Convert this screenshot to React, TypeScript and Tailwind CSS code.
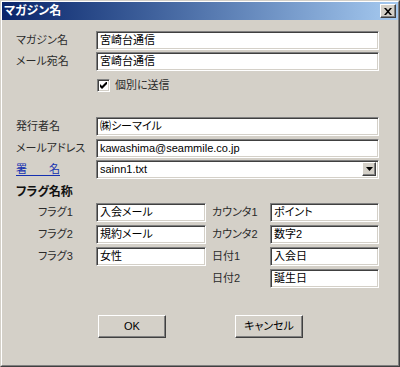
import React from "react"

const font = "font-['Liberation_Sans','Noto_Sans_CJK_JP',sans-serif] [font-feature-settings:'palt']"

function Field({ value, className = "" }: { value: string; className?: string }) {
    return (
        <div
            className={`h-[19px] bg-white border border-t-[#808080] border-l-[#808080] border-b-white border-r-white shadow-[inset_1px_1px_0_#404040,inset_-1px_-1px_0_#d4d0c8] flex items-center pl-[3px] text-[11px] text-black leading-none ${className}`}
        >
            {value}
        </div>
    )
}

function Button({ label }: { label: string }) {
    return (
        <div className="w-[68px] h-[23px] bg-[#d4d0c8] border border-t-white border-l-white border-b-[#404040] border-r-[#404040] shadow-[inset_-1px_-1px_0_#808080] flex items-center justify-center text-[11px] text-black">
            {label}
        </div>
    )
}

function Row({ label, value, top }: { label: string; value: string; top: string }) {
    return (
        <div className={`flex items-center ${top}`}>
            <div className="w-[80px] text-[11px] text-[#2a2a2a]">{label}</div>
            <Field value={value} className="w-[283px]" />
        </div>
    )
}

export default function App() {
    return (
        <div className={`w-[400px] h-[367px] border border-t-[#d4d0c8] border-l-[#d4d0c8] border-b-[#404040] border-r-[#404040] ${font}`}>
            <div className="h-full border border-t-white border-l-white border-b-[#808080] border-r-[#808080] bg-[#d4d0c8] flex flex-col">
                {/* title bar */}
                <div className="h-[18px] bg-gradient-to-r from-[#0a246a] to-[#a6caf0] flex items-center justify-between pl-[2px] pr-[2px]">
                    <span className="text-white font-bold text-[12px] leading-none">マガジン名</span>
                    <div className="w-[16px] h-[14px] bg-[#d4d0c8] border border-t-white border-l-white border-b-[#404040] border-r-[#404040] shadow-[inset_-1px_-1px_0_#808080] flex items-center justify-center">
                        <svg width="8" height="7" viewBox="0 0 8 7">
                            <path d="M0 0h2l2 2.2L6 0h2L5 3.5 8 7H6L4 4.8 2 7H0l3-3.5z" fill="#000" />
                        </svg>
                    </div>
                </div>

                <div className="pl-[14px] flex flex-col">
                    <Row label="マガジン名" value="宮崎台通信" top="mt-[11px]" />
                    <Row label="メール宛名" value="宮崎台通信" top="mt-[2px]" />
                    <div className="flex items-center mt-[6px] pl-[81px] gap-[5px]">
                        <div className="w-[13px] h-[13px] bg-white border border-t-[#808080] border-l-[#808080] border-b-white border-r-white shadow-[inset_1px_1px_0_#404040,inset_-1px_-1px_0_#d4d0c8] flex items-center justify-center">
                            <svg width="7" height="7" viewBox="0 0 7 7">
                                <path d="M0 2v3l2 2 5-5V-1L2 4z" fill="#000" />
                            </svg>
                        </div>
                        <span className="text-[11px] text-[#2a2a2a]">個別に送信</span>
                    </div>

                    <Row label="発行者名" value="㈱シーマイル" top="mt-[23px]" />
                    <Row label="メールアドレス" value="kawashima@seammile.co.jp" top="mt-[3px]" />
                    <div className="flex items-center mt-[2px]">
                        <div className="w-[80px] text-[11px] text-[#1530b0] underline underline-offset-2">署　　名</div>
                        <div className="w-[283px] h-[19px] bg-white border border-t-[#808080] border-l-[#808080] border-b-white border-r-white shadow-[inset_1px_1px_0_#404040,inset_-1px_-1px_0_#d4d0c8] flex items-center justify-between pl-[3px] pr-[2px] text-[11px] text-black">
                            <span>sainn1.txt</span>
                            <div className="w-[14px] h-[14px] bg-[#d4d0c8] border border-t-white border-l-white border-b-[#404040] border-r-[#404040] shadow-[inset_-1px_-1px_0_#808080] flex items-center justify-center">
                                <svg width="7" height="4" viewBox="0 0 7 4">
                                    <path d="M0 0h7L3.5 4z" fill="#000" />
                                </svg>
                            </div>
                        </div>
                    </div>

                    <div className="mt-[4px] text-[12px] font-bold text-[#111]">フラグ名称</div>

                    <div className="grid grid-cols-[58px_110px_64px_109px] gap-y-[3px] items-center pl-[22px] mt-[2px]">
                        <span className="text-[11px] text-[#2a2a2a]">フラグ1</span>
                        <Field value="入会メール" />
                        <span className="pl-[6px] text-[11px] text-[#2a2a2a]">カウンタ1</span>
                        <Field value="ポイント" />

                        <span className="text-[11px] text-[#2a2a2a]">フラグ2</span>
                        <Field value="規約メール" />
                        <span className="pl-[6px] text-[11px] text-[#2a2a2a]">カウンタ2</span>
                        <Field value="数字2" />

                        <span className="text-[11px] text-[#2a2a2a]">フラグ3</span>
                        <Field value="女性" />
                        <span className="pl-[6px] text-[11px] text-[#2a2a2a]">日付1</span>
                        <Field value="入会日" />

                        <span />
                        <span />
                        <span className="pl-[6px] text-[11px] text-[#2a2a2a]">日付2</span>
                        <Field value="誕生日" />
                    </div>

                    <div className="flex mt-[27px] pl-[82px] gap-[69px]">
                        <Button label="OK" />
                        <Button label="キャンセル" />
                    </div>
                </div>
            </div>
        </div>
    )
}
